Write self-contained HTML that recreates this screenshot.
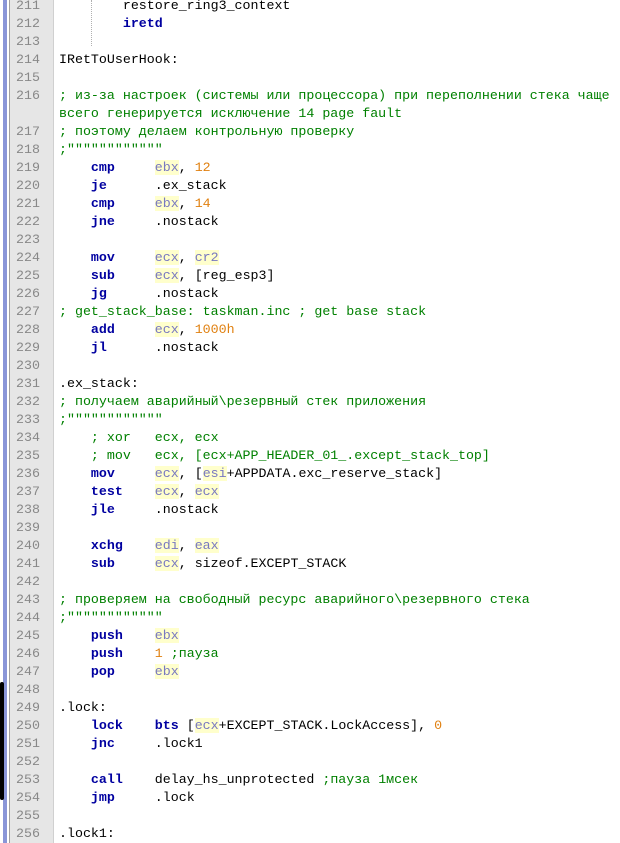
<!DOCTYPE html>
<html><head><meta charset="utf-8"><style>
html,body{margin:0;padding:0;width:620px;height:843px;overflow:hidden;background:#fff}
.gut{position:absolute;left:9px;top:0;width:43px;height:843px;background:#e6e6e6;border-left:1px solid #a0a0a0;border-right:1px solid #d0d0d0}
.bar{position:absolute;left:3px;top:0;width:4px;height:843px;background:#8a96d8}
.blk{position:absolute;left:0;top:682px;width:4px;height:118px;background:#000;border-radius:2px}
.dot{position:absolute;left:91px;top:0;height:46px;border-left:1px dotted #b0b0b0}
pre{position:absolute;margin:0;top:-3px;font-family:"Liberation Mono","DejaVu Sans Mono",monospace;font-size:13.3px;line-height:18px;color:#000}
.nums{left:16px;color:#888}
.code{left:59px}
.k{color:#0000a0;font-weight:bold}
.r{color:#7878c0;background:#ffffcc}
.n{color:#e08010}
.c{color:#008000}
</style></head><body>
<div class="bar"></div><div class="blk"></div><div class="gut"></div><div class="dot"></div>
<pre class="nums">211
212
213
214
215
216

217
218
219
220
221
222
223
224
225
226
227
228
229
230
231
232
233
234
235
236
237
238
239
240
241
242
243
244
245
246
247
248
249
250
251
252
253
254
255
256</pre>
<pre class="code">        restore_ring3_context
        <span class="k">iretd</span>

IRetToUserHook:

<span class="c">; из-за настроек (системы или процессора) при переполнении стека чаще
всего генерируется исключение 14 page fault</span>
<span class="c">; поэтому делаем контрольную проверку</span>
<span class="c">;""""""""""""</span>
    <span class="k">cmp</span>     <span class="r">ebx</span>, <span class="n">12</span>
    <span class="k">je</span>      .ex_stack
    <span class="k">cmp</span>     <span class="r">ebx</span>, <span class="n">14</span>
    <span class="k">jne</span>     .nostack

    <span class="k">mov</span>     <span class="r">ecx</span>, <span class="r">cr2</span>
    <span class="k">sub</span>     <span class="r">ecx</span>, [reg_esp3]
    <span class="k">jg</span>      .nostack
<span class="c">; get_stack_base: taskman.inc ; get base stack</span>
    <span class="k">add</span>     <span class="r">ecx</span>, <span class="n">1000h</span>
    <span class="k">jl</span>      .nostack

.ex_stack:
<span class="c">; получаем аварийный\резервный стек приложения</span>
<span class="c">;""""""""""""</span>
    <span class="c">; xor   ecx, ecx</span>
    <span class="c">; mov   ecx, [ecx+APP_HEADER_01_.except_stack_top]</span>
    <span class="k">mov</span>     <span class="r">ecx</span>, [<span class="r">esi</span>+APPDATA.exc_reserve_stack]
    <span class="k">test</span>    <span class="r">ecx</span>, <span class="r">ecx</span>
    <span class="k">jle</span>     .nostack

    <span class="k">xchg</span>    <span class="r">edi</span>, <span class="r">eax</span>
    <span class="k">sub</span>     <span class="r">ecx</span>, sizeof.EXCEPT_STACK

<span class="c">; проверяем на свободный ресурс аварийного\резервного стека</span>
<span class="c">;""""""""""""</span>
    <span class="k">push</span>    <span class="r">ebx</span>
    <span class="k">push</span>    <span class="n">1</span> <span class="c">;пауза</span>
    <span class="k">pop</span>     <span class="r">ebx</span>

.lock:
    <span class="k">lock</span>    <span class="k">bts</span> [<span class="r">ecx</span>+EXCEPT_STACK.LockAccess], <span class="n">0</span>
    <span class="k">jnc</span>     .lock1

    <span class="k">call</span>    delay_hs_unprotected <span class="c">;пауза 1мсек</span>
    <span class="k">jmp</span>     .lock

.lock1:</pre>
</body></html>
